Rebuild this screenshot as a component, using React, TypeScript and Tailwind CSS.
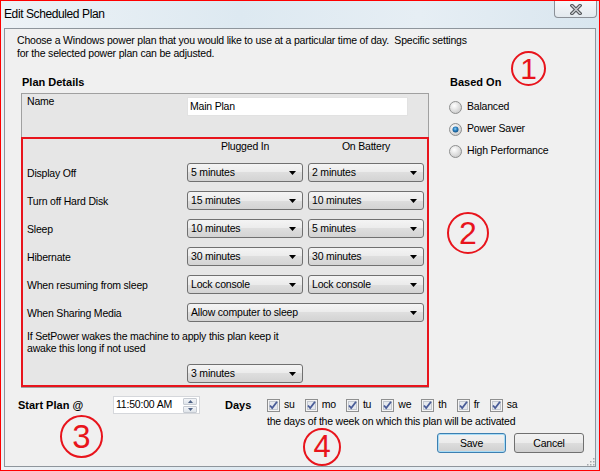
import React from 'react';

const Arrow = () => (
  <svg width="7" height="4" viewBox="0 0 7 4" className="shrink-0">
    <path d="M0 0h7L3.5 4z" fill="#000" />
  </svg>
);

function Dropdown({ value, w = 'w-[116px]' }: { value: string; w?: string }) {
  return (
    <div className={`${w} flex h-[19px] items-center justify-between rounded-[3px] border border-[#707070] bg-[linear-gradient(#f4f4f4,#ebebeb_50%,#dedede_50%,#d3d3d3)] pl-[3px] pr-[6px] leading-[13px]`}>
      <span>{value}</span>
      <Arrow />
    </div>
  );
}

function Radio({ label, checked }: { label: string; checked?: boolean }) {
  return (
    <div className="flex h-[16px] items-center">
      <svg width="13" height="13" viewBox="0 0 13 13" className="-ml-[1px] mr-[5px]">
        <defs>
          <radialGradient id={'rg' + label.length} cx="0.4" cy="0.35" r="0.7">
            <stop offset="0" stopColor="#ffffff" />
            <stop offset="1" stopColor="#c9c9c9" />
          </radialGradient>
          <radialGradient id="dot" cx="0.45" cy="0.4" r="0.6">
            <stop offset="0" stopColor="#8fd0f5" />
            <stop offset="0.5" stopColor="#2a7fc0" />
            <stop offset="1" stopColor="#0f4f82" />
          </radialGradient>
        </defs>
        <circle cx="6.5" cy="6.5" r="6" fill={`url(#rg${label.length})`} stroke="#8e8f8f" />
        {checked && <circle cx="6.5" cy="6.5" r="3" fill="url(#dot)" />}
      </svg>
      <span>{label}</span>
    </div>
  );
}

function Check({ label }: { label: string }) {
  return (
    <div className="flex items-center">
      <svg width="13" height="13" viewBox="0 0 13 13" className="mr-[4px]">
        <rect x="0.5" y="0.5" width="12" height="12" fill="#f4f4f4" stroke="#8e8f8f" />
        <rect x="2.5" y="2.5" width="8" height="8" fill="#e6e9ee" stroke="#c2c7cf" />
        <path d="M3 6.5l2.2 2.6L10 2.8" fill="none" stroke="#4a5d98" strokeWidth="1.8" />
      </svg>
      <span>{label}</span>
    </div>
  );
}

function Marker({ n, className }: { n: string; className: string }) {
  return (
    <div className={`absolute flex items-center justify-center rounded-full border-2 border-[#e8141c] text-[#e8141c] font-['Liberation_Sans',sans-serif] tracking-normal ${className}`}>
      {n}
    </div>
  );
}

const rows: [string, string, string][] = [
  ['Display Off', '5 minutes', '2 minutes'],
  ['Turn off Hard Disk', '15 minutes', '10 minutes'],
  ['Sleep', '10 minutes', '5 minutes'],
  ['Hibernate', '30 minutes', '30 minutes'],
  ['When resuming from sleep', 'Lock console', 'Lock console'],
];

export default function App() {
  const days = ['su', 'mo', 'tu', 'we', 'th', 'fr', 'sa'];
  return (
    <div className="relative flex h-[471px] w-[600px] flex-col border border-[#ff0000] bg-[linear-gradient(90deg,#edf2f6,#dde9f1_40%,#e6eef4_70%,#d9e6ef)] font-['Liberation_Sans',Arial,sans-serif] text-[10.5px] tracking-[-0.2px] text-black">
      {/* title bar */}
      <div className="flex h-[27px] shrink-0 items-start justify-between">
        <div className="pl-[3px] pt-[5px] text-[12px] leading-[16px] tracking-[-0.4px] text-black">Edit Scheduled Plan</div>
        <div className="mr-[2px] flex h-[17px] w-[43px] items-center justify-center rounded-b-[4px] border border-t-0 border-[#8b9097] bg-[linear-gradient(#f6f8fa,#e3e9ee)]">
          <svg width="12" height="11" viewBox="0 0 12 11">
            <path d="M2 1.5l8 8M10 1.5l-8 8" stroke="#4f5256" strokeWidth="3.4" strokeLinecap="square" />
            <path d="M2 1.5l8 8M10 1.5l-8 8" stroke="#c9ccd0" strokeWidth="1.4" strokeLinecap="square" />
          </svg>
        </div>
      </div>

      {/* client area */}
      <div className="mx-[3px] mb-[3px] flex flex-1 flex-col border border-[#8e959c] bg-[#f0f0f0]">
        <p className="pl-[12px] pt-[5px] leading-[13px]">
          Choose a Windows power plan that you would like to use at a particular time of day.&nbsp; Specific settings
          <br />
          for the selected power plan can be adjusted.
        </p>

        <div className="mt-[16px] flex">
          {/* plan details */}
          <div className="ml-[16px] w-[408px]">
            <div className="pl-[1px] text-[11px] font-bold leading-[13px] tracking-normal">Plan Details</div>
            <div className="mt-[4px] flex flex-col border border-[#a0a0a0] bg-[#e6e6e6]">
              <div className="flex h-[43px] items-start pl-[5px]">
                <div className="w-[160px] pt-[1px] leading-[13px]">Name</div>
                <div className="mt-[3px] flex h-[19px] w-[221px] items-center border border-[#e2e2e2] bg-white pl-[2px]">Main Plan</div>
              </div>
              <div className="-mx-[1px] flex flex-col border-2 border-[#e8141c] pb-[2px] pl-[4px] pt-[1px]">
                <div className="grid grid-cols-[155px_116px_116px] gap-x-[5px] leading-[13px]">
                  <div />
                  <div className="text-center">Plugged In</div>
                  <div className="text-center">On Battery</div>
                </div>
                <div className="mt-[10px] flex flex-col gap-y-[9px]">
                  {rows.map(([label, a, b]) => (
                    <div key={label} className="grid grid-cols-[155px_116px_116px] items-center gap-x-[5px]">
                      <div className="pt-[2px] leading-[13px]">{label}</div>
                      <Dropdown value={a} />
                      <Dropdown value={b} />
                    </div>
                  ))}
                  <div className="grid grid-cols-[160px_237px] items-center">
                    <div className="pt-[2px] leading-[13px]">When Sharing Media</div>
                    <Dropdown value="Allow computer to sleep" w="w-[237px]" />
                  </div>
                </div>
                <p className="mt-[8px] leading-[12px]">
                  If SetPower wakes the machine to apply this plan keep it
                  <br />
                  awake this long if not used
                </p>
                <div className="mt-[10px] pl-[160px]">
                  <Dropdown value="3 minutes" />
                </div>
              </div>
            </div>
          </div>

          {/* based on */}
          <div className="ml-[21px] flex flex-col">
            <div className="text-[11px] font-bold leading-[13px] tracking-normal">Based On</div>
            <div className="mt-[10px] flex flex-col gap-y-[6px]">
              <Radio label="Balanced" />
              <Radio label="Power Saver" checked />
              <Radio label="High Performance" />
            </div>
          </div>
        </div>

        {/* start / days */}
        <div className="mt-[8px] flex items-start pl-[13px]">
          <div className="w-[95px] text-[11px] font-bold leading-[18px] tracking-normal">Start Plan @</div>
          <div className="flex h-[18px] w-[87px] items-center justify-between border border-[#d5d7db] bg-white pl-[2px] pr-[2px]">
            <span>11:50:00 AM</span>
            <div className="flex h-[15px] w-[14px] flex-col gap-[1px]">
              <div className="flex flex-1 items-center justify-center rounded-[1px] border border-[#c6cbd2] bg-[linear-gradient(#f3f5f8,#dfe4ea)]">
                <svg width="5" height="3" viewBox="0 0 5 3"><path d="M0 3h5L2.5 0z" fill="#4d6185" /></svg>
              </div>
              <div className="flex flex-1 items-center justify-center rounded-[1px] border border-[#c6cbd2] bg-[linear-gradient(#f3f5f8,#dfe4ea)]">
                <svg width="5" height="3" viewBox="0 0 5 3"><path d="M0 0h5L2.5 3z" fill="#4d6185" /></svg>
              </div>
            </div>
          </div>
          <div className="ml-[25px] w-[42px] text-[11px] font-bold leading-[18px] tracking-normal">Days</div>
          <div className="flex flex-col">
            <div className="flex h-[18px] items-center gap-x-[10px]">
              {days.map((d) => (
                <Check key={d} label={d} />
              ))}
            </div>
            <div className="mt-[1px] leading-[13px]">the days of the week on which this plan will be activated</div>
          </div>
        </div>

        <div className="mr-[11px] mt-[5px] flex justify-end gap-x-[8px]">
          <button className="h-[20px] w-[69px] rounded-[3px] border border-[#3c7fb1] bg-[linear-gradient(#f2f2f2,#ebebeb_50%,#dddddd_50%,#cfcfcf)] leading-[13px] shadow-[inset_0_0_0_1px_#a8dcf6]">Save</button>
          <button className="h-[20px] w-[70px] rounded-[3px] border border-[#707070] bg-[linear-gradient(#f2f2f2,#ebebeb_50%,#dddddd_50%,#cfcfcf)] leading-[13px]">Cancel</button>
        </div>
      </div>

      {/* resize grip */}
      <svg width="10" height="10" viewBox="0 0 10 10" className="absolute left-[584px] top-[455px]">
        {[[8, 2], [8, 5], [5, 5], [8, 8], [5, 8], [2, 8]].map(([x, y]) => (
          <rect key={`${x}-${y}`} x={x} y={y} width="1.5" height="1.5" fill="#a5a9ad" />
        ))}
      </svg>

      {/* annotation markers */}
      <Marker n="1" className="left-[510px] top-[50px] h-[35px] w-[35px] text-[30px]" />
      <Marker n="2" className="left-[446px] top-[211px] h-[42px] w-[42px] text-[32px]" />
      <Marker n="3" className="left-[59px] top-[414px] h-[43px] w-[43px] text-[33px]" />
      <Marker n="4" className="left-[302px] top-[427px] h-[38px] w-[38px] text-[31px]" />
    </div>
  );
}
